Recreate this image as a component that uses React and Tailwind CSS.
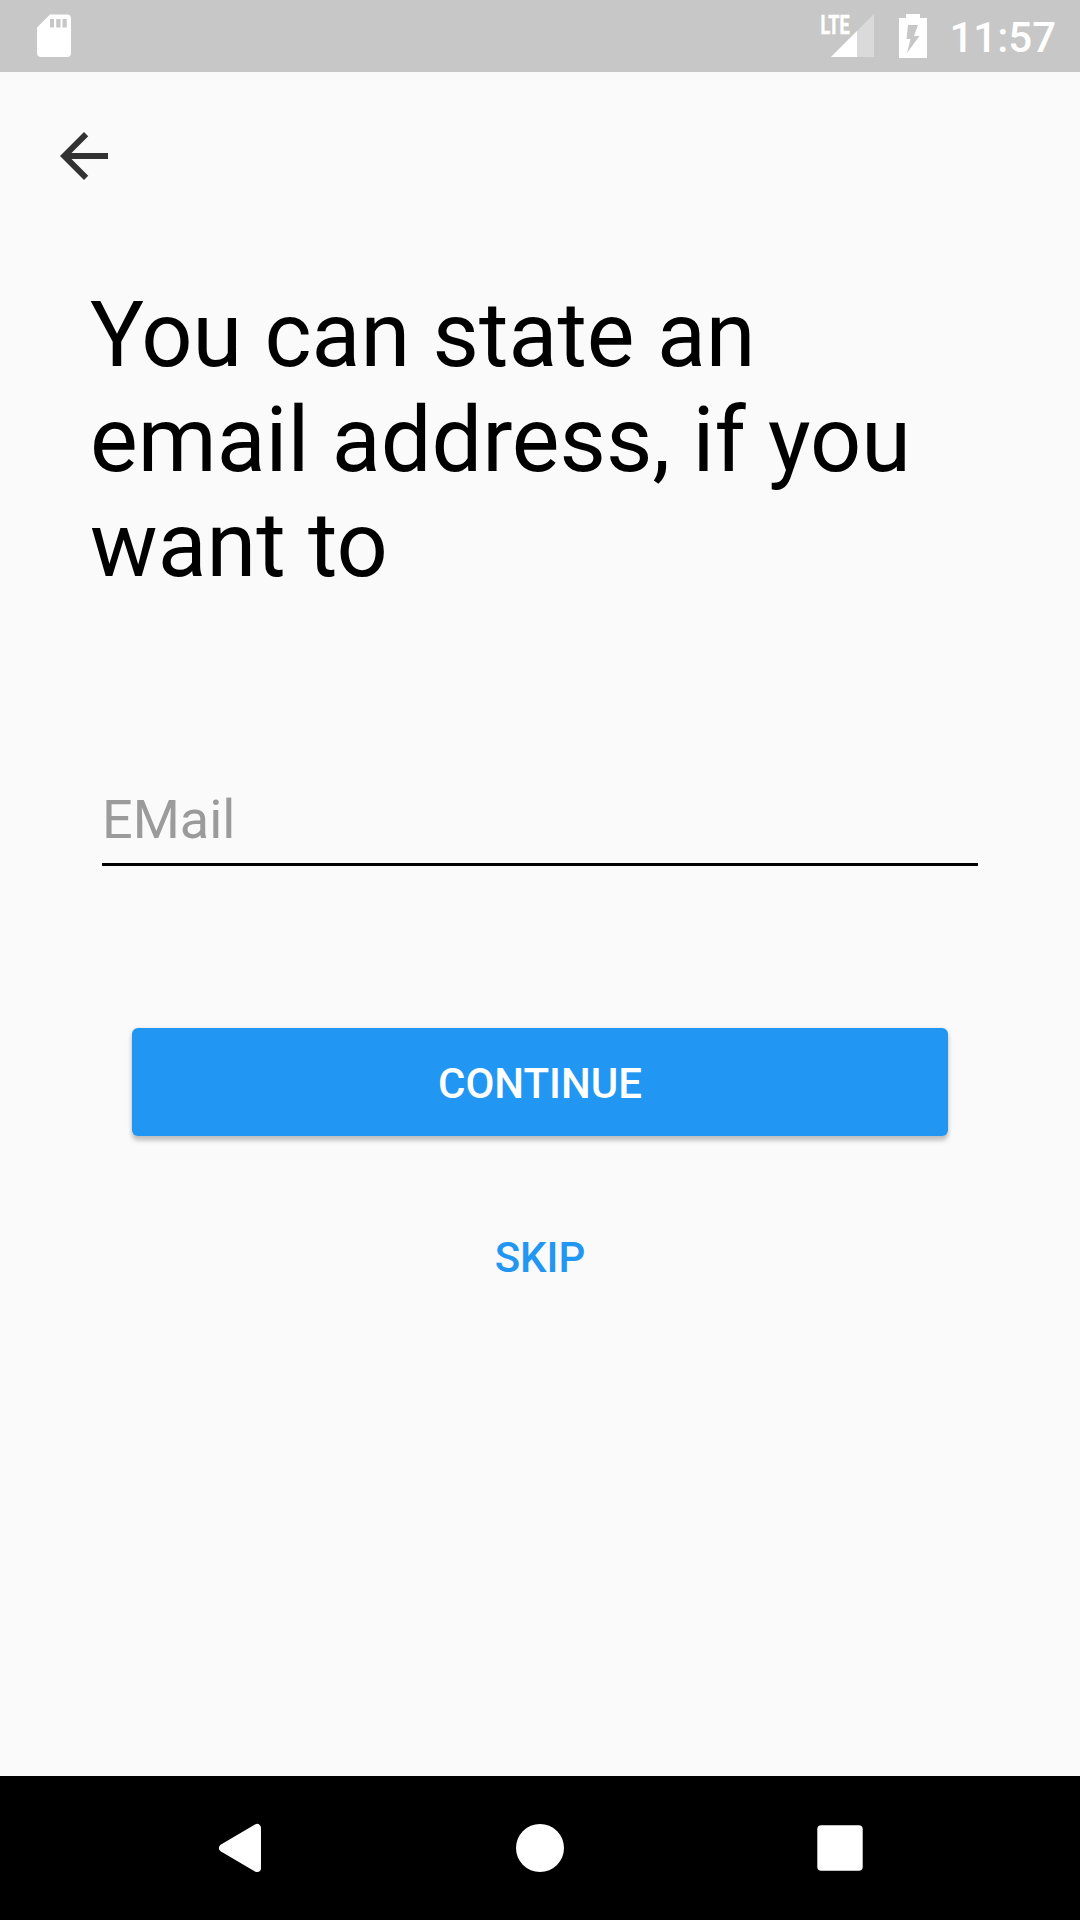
export default function App() {
  return (
    <div className="flex h-[1920px] w-[1080px] flex-col overflow-hidden bg-[#fafafa] font-['Roboto',sans-serif] text-black">
      <header className="flex h-[72px] shrink-0 items-center justify-between bg-[#c7c7c7] pl-[36px] pr-[24px] text-white">
        <svg className="h-[44px] w-[36px]" viewBox="0 0 36 44" fill="currentColor">
          <path fillRule="evenodd" d="M14 .5H31a4 4 0 0 1 4 4V39a4 4 0 0 1-4 4H5a4 4 0 0 1-4-4V13.500ZM14 5v8.500h4V5Zm6.250 0v8.500h4.250V5Zm6.250 0v8.500h4.250V5Z" />
        </svg>
        <div className="flex items-center">
          <svg className="mr-[24px] h-[44px] w-[55px] overflow-visible" viewBox="0 0 55 44" fill="currentColor">
            <path opacity=".35" d="M54 0V43H11Z" />
            <path d="M37 17V43H11Z" />
            <text x="0.500" y="19.500" fontFamily="Roboto" fontSize="26" fontWeight="700" textLength="29" lengthAdjust="spacingAndGlyphs" stroke="currentColor" strokeWidth="0.600">LTE</text>
          </svg>
          <svg className="mr-[22px] h-[44px] w-[28px]" viewBox="0 0 28 44" fill="currentColor">
            <path fillRule="evenodd" d="M7 0h14v4h7v40H0V4h7ZM9 11 7.500 25h4L8 39 20.500 22H15l4-11Z" />
          </svg>
          <span className="pt-[2px] text-[42px] font-medium leading-[49px]">11:57</span>
        </div>
      </header>
      <main className="flex flex-1 flex-col">
        <button aria-label="Back" className="ml-[48px] mt-[48px] size-[72px]">
          <svg className="size-[72px]" viewBox="0 0 24 24" fill="#323232">
            <path d="M20 11H7.83l5.59-5.59L12 4l-8 8 8 8 1.41-1.41L7.83 13H20z" />
          </svg>
        </button>
        <h1 className="ml-[90px] mt-[91px] w-[900px] text-[90px] leading-[105px]">You can state an email address, if you want to</h1>
        <div className="mx-[102px] mt-[173px] h-[95px] border-b-[3px] border-black">
          <input aria-label="Email" placeholder="EMail" className="block h-[95px] w-full bg-transparent pt-[2px] text-[54px] outline-none placeholder:text-[#9b9b9b]" />
        </div>
        <button className="mx-[132px] mt-[162px] h-[108px] rounded-[6px] bg-[#2196f3] pt-[2px] text-[42px] font-medium text-white shadow-[0_5px_4px_rgba(0,0,0,0.18),0_1px_5px_rgba(0,0,0,0.12)]">CONTINUE</button>
        <button className="mx-[132px] mt-[66px] h-[108px] pt-[2px] text-[42px] font-medium text-[#2196f3]">SKIP</button>
      </main>
      <nav className="flex h-[144px] shrink-0 items-center bg-black text-white">
        <svg className="h-[144px] w-[1080px]" viewBox="0 0 1080 144" fill="currentColor">
          <path d="M223 72 257 52V92Z" stroke="currentColor" strokeWidth="8" strokeLinejoin="round" />
          <circle cx="540" cy="72" r="24" />
          <rect x="817.300" y="49.300" width="45.400" height="45.400" rx="4" />
        </svg>
      </nav>
    </div>
  );
}
